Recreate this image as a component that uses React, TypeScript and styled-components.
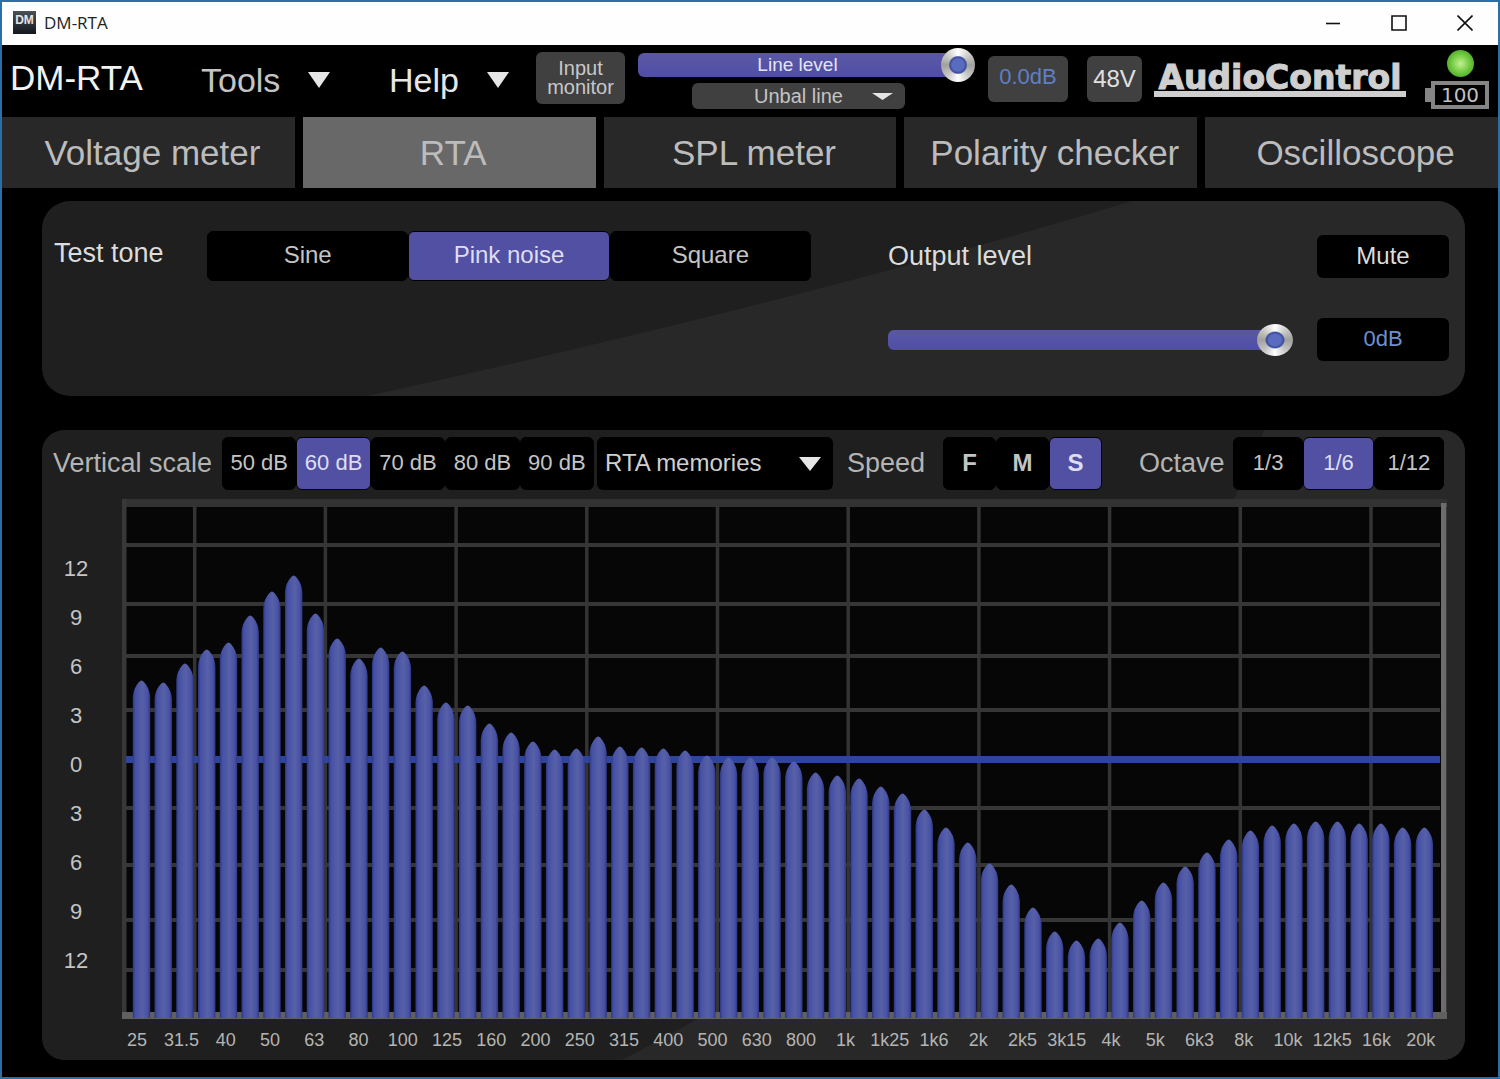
import React, { useState } from "react";
import styled, { createGlobalStyle } from "styled-components";

const sans = `"Liberation Sans", Arial, sans-serif`;
const violet = "#5250a3";
const blueText = "#6d8fd0";

const GlobalStyle = createGlobalStyle`
  * { box-sizing: border-box; }
  body { margin: 0; background: #000; font-family: ${sans}; }
  button, select, input { font: inherit; margin: 0; }
`;

const Window = styled.div`
  display: flex;
  flex-direction: column;
  min-height: 100vh;
  border: 2px solid #2c6ea6;
  background: #000;
  color: #d4d4d4;
`;

const TitleBar = styled.div`
  display: flex;
  align-items: center;
  height: 43px;
  padding: 0 0 2px 11px;
  background: #fefefe;
  color: #222;
  font: 17px/24px "Open Sans", sans-serif;
`;

const AppIcon = styled.span`
  width: 23px;
  height: 23px;
  margin-right: 8px;
  padding-top: 3px;
  background: linear-gradient(#4a5058, #14181e);
  color: #e4e4e4;
  font: bold 12px/12px ${sans};
  text-align: center;
`;

const WindowControls = styled.div`
  display: flex;
  margin-left: auto;
`;

const WindowButton = styled.button`
  display: grid;
  place-items: center;
  width: 66px;
  height: 41px;
  padding: 0;
  border: 0;
  background: none;
`;

const Header = styled.header`
  display: flex;
  align-items: flex-start;
  height: 72px;
  padding: 0 9px 0 8px;
`;

const Brand = styled.h1`
  flex: none;
  width: 191px;
  margin: 10px 0 0;
  color: #f2f2f2;
  font: 35px/46px ${sans};
`;

const MenuButton = styled.button<{ $bright?: boolean }>`
  display: flex;
  justify-content: space-between;
  align-items: center;
  flex: none;
  width: ${(p) => (p.$bright ? 120 : 129)}px;
  height: 46px;
  margin: 12px ${(p) => (p.$bright ? 27 : 59)}px 0 0;
  padding: 0;
  border: 0;
  background: none;
  color: ${(p) => (p.$bright ? "#e6e6e6" : "#c4c4c4")};
  font: 34px/46px ${sans};
`;

const HeaderButton = styled.button<{ $w: number; $tall?: boolean }>`
  flex: none;
  width: ${(p) => p.$w}px;
  height: ${(p) => (p.$tall ? 52 : 46)}px;
  margin-top: ${(p) => (p.$tall ? 7 : 11)}px;
  padding: 0;
  border: 0;
  border-radius: 6px;
  background: #404040;
  color: ${(p) => (p.$tall ? "#c8c8c8" : "#e0e0e0")};
  font: ${(p) => (p.$tall ? "20px/19px" : "24px/42px")} ${sans};
`;

const GainReadout = styled.output`
  flex: none;
  width: 80px;
  height: 46px;
  margin: 11px 19px 0 13px;
  border-radius: 6px;
  background: #404040;
  color: #5f7fc4;
  font: 22px/42px ${sans};
  text-align: center;
`;

const InputGroup = styled.div`
  display: flex;
  flex: 1;
  flex-direction: column;
  align-items: center;
  min-width: 240px;
  margin-left: 13px;
`;

const Stack = styled.div`
  display: grid;
  align-items: center;
  > * { grid-area: 1 / 1; }
  > svg { justify-self: end; margin-right: 12px; pointer-events: none; }
`;

const LevelStack = styled(Stack)`
  width: 100%;
  height: 34px;
  margin: 3px 0 1px;
`;

const SourceStack = styled(Stack)`
  width: 213px;
  margin-right: 16px;
`;

const LevelLabel = styled.label`
  padding-right: 18px;
  color: #e4e4f4;
  font: 19px/24px ${sans};
  text-align: center;
  pointer-events: none;
  z-index: 1;
`;

const Range = styled.input<{ $track: number; $tw: number; $th: number }>`
  appearance: none;
  width: 100%;
  height: ${(p) => p.$th}px;
  background: none;
  &::-webkit-slider-runnable-track {
    height: ${(p) => p.$track}px;
    border-radius: 6px;
    background: linear-gradient(#5a58a4, #504ea6) 0 0 / calc(100% - 17px) 100% no-repeat;
  }
  &::-webkit-slider-thumb {
    appearance: none;
    width: ${(p) => p.$tw}px;
    height: ${(p) => p.$th}px;
    margin-top: ${(p) => (p.$track - p.$th) / 2}px;
    border-radius: 50%;
    background:
      radial-gradient(closest-side, #5a6cc0 0 34%, #3c4c9c 48%, transparent 56%),
      conic-gradient(#fff, #c4c4c0 15%, #a0a09c 25%, #c8c8c8 38%, #fff 50%, #c8c8c8 62%, #a0a09c 75%, #c4c4c0 85%, #fff);
  }
`;

const SourceSelect = styled.select`
  appearance: none;
  width: 100%;
  height: 26px;
  padding: 0;
  border: 0;
  border-radius: 6px;
  background: #404040;
  color: #c4c4c4;
  font: 20px/24px ${sans};
  text-align: center;
  text-align-last: center;
`;

const Logo = styled.div`
  flex: none;
  width: 252px;
  margin: 20px 0 0 12px;
  border-bottom: 6px solid #cfcfcf;
  color: #cfcfcf;
  font: bold 33px/26px "DejaVu Sans", sans-serif;
  -webkit-text-stroke: 1px #cfcfcf;
  text-align: center;
  white-space: nowrap;
`;

const Status = styled.div`
  display: flex;
  flex: none;
  flex-direction: column;
  align-items: center;
  width: 64px;
  margin: 5px 0 0 19px;
`;

const Led = styled.span`
  width: 27px;
  height: 27px;
  margin: 0 0 4px 6px;
  border-radius: 50%;
  background: radial-gradient(#c4f090, #6cc83c 50%, #3d8a20);
`;

const Battery = styled.div`
  display: flex;
  align-items: center;
  width: 64px;
  &::before {
    content: "";
    width: 6px;
    height: 14px;
    background: #858585;
  }
`;

const BatteryLevel = styled.span`
  flex: 1;
  height: 28px;
  border: 4px solid #858585;
  color: #c0c0c0;
  font: 20px/20px "DejaVu Sans", sans-serif;
  text-align: center;
`;

const Tabs = styled.nav`
  display: grid;
  grid-template-columns: repeat(5, minmax(0, 1fr));
  gap: 8px;
  margin-bottom: 13px;
`;

const Tab = styled.button<{ $on: boolean }>`
  height: 71px;
  padding: 0 0 0 8px;
  border: 0;
  background: ${(p) => (p.$on ? "#686868" : "#282828")};
  color: #bcbcbc;
  font: 35px/70px ${sans};
  white-space: nowrap;
`;

const Panel = styled.section<{ $r: number }>`
  position: relative;
  isolation: isolate;
  margin: 0 33px 0 40px;
  border-radius: ${(p) => p.$r}px;
  overflow: hidden;
  background: #1f1f1f;
`;

const Sheen = styled.svg`
  position: absolute;
  inset: 0;
  z-index: -1;
  width: 100%;
  height: 100%;
  fill: #282828;
`;

const TonePanel = styled(Panel)`
  display: flex;
  align-items: flex-start;
  height: 195px;
  margin-bottom: 34px;
  padding: 30px 16px 0 12px;
`;

const Label = styled.label<{ $w?: number; $pad?: number; $dim?: boolean }>`
  flex: none;
  width: ${(p) => (p.$w ? p.$w + "px" : "auto")};
  padding: 0 0 2px ${(p) => p.$pad ?? 0}px;
  color: ${(p) => (p.$dim ? "#b4b4b4" : "#dcdcdc")};
  font: 27px/44px ${sans};
  white-space: nowrap;
`;

const Segments = styled.div<{ $grow?: boolean; $endGap?: number }>`
  display: flex;
  flex: ${(p) => (p.$grow ? "604 1 0" : "none")};
  padding-right: ${(p) => p.$endGap ?? 0}px;
`;

const Segment = styled.button<{ $on: boolean; $size: number; $h: number; $bold?: boolean }>`
  flex: 1 1 0;
  height: ${(p) => p.$h}px;
  padding: 0 0 2px;
  border: 1px solid #000;
  border-radius: 6px;
  background: ${(p) => (p.$on ? violet : "#000")};
  color: ${(p) => (p.$on ? "#dedef2" : "#c4c4c4")};
  font: ${(p) => (p.$bold ? "bold " : "")}${(p) => p.$size}px/28px ${sans};
  white-space: nowrap;
`;

const OutputGrid = styled.div`
  display: grid;
  flex: 561 1 0;
  grid-template-columns: 1fr 132px;
  grid-template-rows: 43px 43px;
  gap: 40px 24px;
  align-items: center;
  margin: 4px 0 0 77px;
`;

const MuteButton = styled.button`
  height: 43px;
  padding: 0 0 2px;
  border: 0;
  border-radius: 6px;
  background: #000;
  color: #dcdcdc;
  font: 24px/28px ${sans};
`;

const LevelReadout = styled.output`
  height: 43px;
  border-radius: 6px;
  background: #000;
  color: ${blueText};
  font: 22px/41px ${sans};
  text-align: center;
`;

const RtaPanel = styled(Panel)`
  height: 630px;
  padding-top: 7px;
`;

const Toolbar = styled.div`
  display: grid;
  grid-template-columns: 169px 375fr 236fr 110px 159fr 131px 211fr;
  align-items: center;
  margin-bottom: 9px;
  padding: 0 21px 0 11px;
`;

const MemorySelect = styled.select`
  appearance: none;
  width: 100%;
  height: 53px;
  padding: 0 0 2px 8px;
  border: 0;
  border-radius: 6px;
  background: #000;
  color: #cfcfcf;
  font: 24px/28px ${sans};
`;

const ChartRow = styled.div`
  display: grid;
  grid-template-columns: 68px 1fr;
  column-gap: 12px;
  padding-right: 18px;
`;

const YAxis = styled.div`
  padding-top: 45px;
  color: #c4c4c4;
  font: 22px/49px ${sans};
  text-align: center;
`;

const Chart = styled.svg`
  display: block;
  width: 100%;
  height: 520px;
`;

const XAxis = styled.div`
  display: grid;
  grid-template-columns: repeat(30, 1fr);
  padding: 9px 22px 0 73px;
  color: #b4b4b4;
  font: 18px/24px ${sans};
  text-align: center;
`;

const Arrow = ({ w = 22, h = 16 }: { w?: number; h?: number }) => (
  <svg width={w} height={h} viewBox="0 0 22 16" preserveAspectRatio="none" aria-hidden="true">
    <path d="M0 0h22L11 16z" fill="#e6e6e6" />
  </svg>
);

const yLabels = [12, 9, 6, 3, 0, 3, 6, 9, 12];
const xLabels = "25 31.5 40 50 63 80 100 125 160 200 250 315 400 500 630 800 1k 1k25 1k6 2k 2k5 3k15 4k 5k 6k3 8k 10k 12k5 16k 20k".split(" ");
const levels = [
  338, 336, 355, 369, 376, 403, 427, 443, 405, 380, 360, 371, 367, 333, 316, 313, 295, 286, 277, 269,
  270, 282, 272, 271, 270, 268, 263, 261, 261, 261, 257, 246, 243, 240, 232, 225, 209, 191, 176, 155,
  134, 111, 87, 78, 80, 96, 118, 136, 152, 166, 179, 188, 193, 195, 197, 197, 195, 195, 191, 191,
];
const rows = [46, 105, 157, 211, 309, 366, 421, 471];

function Spectrum() {
  return (
    <Chart viewBox="0 0 1326 520" preserveAspectRatio="none" role="img" aria-label="Spectrum in sixth octaves">
      <defs>
        <linearGradient id="bar">
          <stop offset="0" stopColor="#2c3880" />
          <stop offset="0.15" stopColor="#4650a6" />
          <stop offset="0.55" stopColor="#5761a6" />
          <stop offset="0.85" stopColor="#4851a6" />
          <stop offset="1" stopColor="#30387c" />
        </linearGradient>
      </defs>
      <rect width="1326" height="520" fill="#060606" />
      {Array.from({ length: 10 }, (_, i) => (
        <rect key={i} x={71 + i * 130.8} y="4" width="3.5" height="510" fill="#343434" />
      ))}
      {rows.map((y) => (
        <rect key={y} x="2" y={y - 2} width="1317" height="4" fill="#363636" />
      ))}
      <rect width="1326" height="8" fill="#323232" />
      <rect width="4.5" height="520" fill="#383838" />
      <rect x="1320" y="4" width="5.5" height="516" fill="#6c6c6c" />
      <rect y="513" width="1326" height="7" fill="#606060" />
      <rect x="4" y="257" width="1315" height="7" fill="#2f459c" />
      {levels.map((v, i) => {
        const x = 19.5 + i * 21.76;
        const t = 520 - v;
        return (
          <path
            key={i}
            d={`M${x - 8.7} 519V${t + 16}Q${x - 8} ${t + 7} ${x - 2.5} ${t + 1}Q${x} ${t - 2} ${x + 2.5} ${t + 1}Q${x + 8} ${t + 7} ${x + 8.7} ${t + 16}V519z`}
            fill="url(#bar)"
          />
        );
      })}
    </Chart>
  );
}

type PickProps = { name: string; options: string[]; initial: string; size: number; h: number; bold?: boolean; grow?: boolean; endGap?: number };

function Picker({ name, options, initial, size, h, bold, grow, endGap }: PickProps) {
  const [value, setValue] = useState(initial);
  return (
    <Segments role="group" aria-label={name} $grow={grow} $endGap={endGap}>
      {options.map((o) => (
        <Segment key={o} $on={o === value} $size={size} $h={h} $bold={bold} aria-pressed={o === value} onClick={() => setValue(o)}>
          {o}
        </Segment>
      ))}
    </Segments>
  );
}

export default function App() {
  const [tab, setTab] = useState("RTA");
  return (
    <Window>
      <GlobalStyle />
      <TitleBar>
        <AppIcon>DM</AppIcon>
        DM-RTA
        <WindowControls>
          <WindowButton aria-label="Minimize">
            <svg width="16" height="16" stroke="#111" strokeWidth="1.6"><path d="M1 8.500h14" /></svg>
          </WindowButton>
          <WindowButton aria-label="Maximize">
            <svg width="16" height="16" fill="none" stroke="#111" strokeWidth="1.600"><path d="M1 1h14v14H1z" /></svg>
          </WindowButton>
          <WindowButton aria-label="Close">
            <svg width="16" height="16" stroke="#111" strokeWidth="1.6"><path d="M.5.5l15 15M15.500.5l-15 15" /></svg>
          </WindowButton>
        </WindowControls>
      </TitleBar>

      <Header>
        <Brand>DM-RTA</Brand>
        <MenuButton>Tools<Arrow /></MenuButton>
        <MenuButton $bright>Help<Arrow /></MenuButton>
        <HeaderButton $w={89} $tall>Input<br />monitor</HeaderButton>
        <InputGroup>
          <LevelStack>
            <Range id="line" type="range" defaultValue={100} $track={24} $tw={34} $th={34} />
            <LevelLabel htmlFor="line">Line level</LevelLabel>
          </LevelStack>
          <SourceStack>
            <SourceSelect aria-label="Input source"><option>Unbal line</option></SourceSelect>
            <Arrow w={21} h={7} />
          </SourceStack>
        </InputGroup>
        <GainReadout>0.0dB</GainReadout>
        <HeaderButton $w={55}>48V</HeaderButton>
        <Logo>AudioControl</Logo>
        <Status>
          <Led />
          <Battery><BatteryLevel>100</BatteryLevel></Battery>
        </Status>
      </Header>

      <Tabs>
        {["Voltage meter", "RTA", "SPL meter", "Polarity checker", "Oscilloscope"].map((t) => (
          <Tab key={t} $on={t === tab} onClick={() => setTab(t)}>{t}</Tab>
        ))}
      </Tabs>

      <TonePanel $r={28}>
        <Sheen viewBox="0 0 1423 195" preserveAspectRatio="none" aria-hidden="true">
          <path d="M325 195Q760 100 1090 0H1423V195z" />
        </Sheen>
        <Label as="span" $w={153}>Test tone</Label>
        <Picker name="Test tone" options={["Sine", "Pink noise", "Square"]} initial="Pink noise" size={24} h={50} grow />
        <OutputGrid>
          <Label htmlFor="out">Output level</Label>
          <MuteButton>Mute</MuteButton>
          <Range id="out" type="range" defaultValue={100} $track={20} $tw={36} $th={32} />
          <LevelReadout>0dB</LevelReadout>
        </OutputGrid>
      </TonePanel>

      <RtaPanel $r={22}>
        <Sheen viewBox="0 0 1423 630" preserveAspectRatio="none" aria-hidden="true">
          <path d="M1222 0Q1080 370 580 630H1423V0z" />
        </Sheen>
        <Toolbar>
          <Label as="span" $dim>Vertical scale</Label>
          <Picker name="Vertical scale" options={["50 dB", "60 dB", "70 dB", "80 dB", "90 dB"]} initial="60 dB" size={22} h={53} endGap={3} />
          <Stack>
            <MemorySelect aria-label="RTA memories"><option>RTA memories</option></MemorySelect>
            <Arrow w={22} h={14} />
          </Stack>
          <Label as="span" $dim $pad={14}>Speed</Label>
          <Picker name="Speed" options={["F", "M", "S"]} initial="S" size={24} h={53} bold />
          <Label as="span" $dim $pad={37}>Octave</Label>
          <Picker name="Octave" options={["1/3", "1/6", "1/12"]} initial="1/6" size={22} h={53} />
        </Toolbar>
        <ChartRow>
          <YAxis>{yLabels.map((n, i) => <div key={i}>{n}</div>)}</YAxis>
          <Spectrum />
        </ChartRow>
        <XAxis>{xLabels.map((n) => <span key={n}>{n}</span>)}</XAxis>
      </RtaPanel>
    </Window>
  );
}
